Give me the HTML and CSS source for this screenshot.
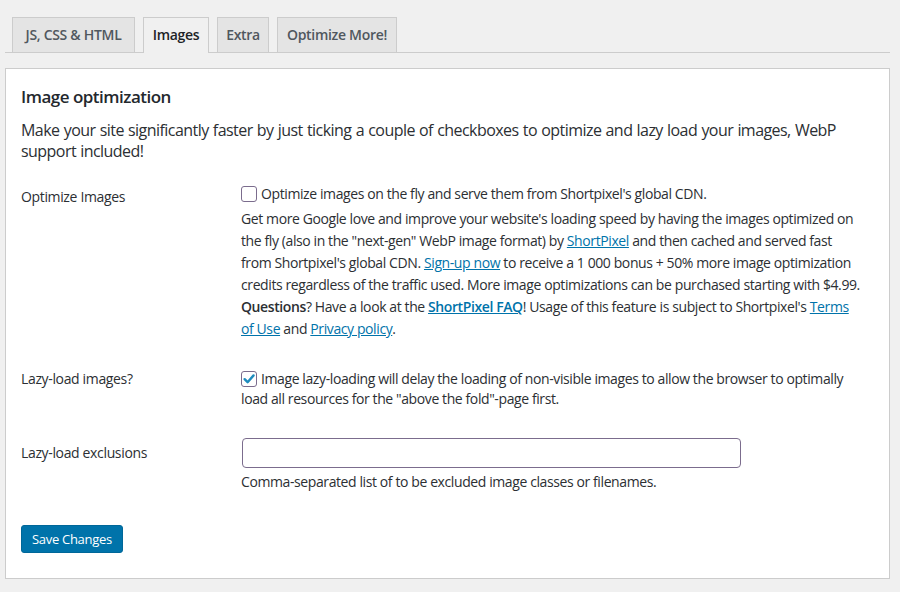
FILE: index.html
```html
<!DOCTYPE html>
<html lang="en">
<head>
<meta charset="utf-8">
<title>Image optimization</title>
<link rel="stylesheet" href="styles.css">
</head>
<body>
<div class="wrap">
  <nav class="nav-tabs">
    <a class="tab tab-js">JS, CSS &amp; HTML</a>
    <a class="tab tab-img active">Images</a>
    <a class="tab tab-extra">Extra</a>
    <a class="tab tab-more">Optimize More!</a>
  </nav>
  <form class="panel">
    <h2 class="title">Image optimization</h2>
    <p class="intro">Make your site significantly faster by just ticking a couple of checkboxes to optimize and lazy load your images, WebP support included!</p>

    <div class="row row-opt">
      <div class="label">Optimize Images</div>
      <div class="field">
        <label class="check-line"><span class="cb"></span>Optimize images on the fly and serve them from Shortpixel's global CDN.</label>
        <p class="desc">Get more Google love and improve your website's loading speed by having the images optimized on the fly (also in the "next-gen" WebP image format) by <a>ShortPixel</a> and then cached and served fast from Shortpixel's global CDN. <a>Sign-up now</a> to receive a 1 000 bonus + 50% more image optimization credits regardless of the traffic used. More image optimizations can be purchased starting with $4.99.</p>
        <p class="desc"><strong>Questions</strong>? Have a look at the <a><strong>ShortPixel FAQ</strong></a>! Usage of this feature is subject to Shortpixel's <a>Terms of Use</a> and <a>Privacy policy</a>.</p>
      </div>
    </div>

    <div class="row row-lazy">
      <div class="label">Lazy-load images?</div>
      <div class="field">
        <label class="check-line lazy"><span class="cb checked"><svg viewBox="0 0 16 16" width="16" height="16"><path d="M3.6 8.2 L6.6 11.2 L12.6 4.4" fill="none" stroke="#1e8cbe" stroke-width="2.4" stroke-linecap="round" stroke-linejoin="round"/></svg></span>Image lazy-loading will delay the loading of non-visible images to allow the browser to optimally load all resources for the "above the fold"-page first.</label>
      </div>
    </div>

    <div class="row row-excl">
      <div class="label">Lazy-load exclusions</div>
      <div class="field">
        <input class="text-input" type="text" value="">
        <p class="small-desc">Comma-separated list of to be excluded image classes or filenames.</p>
      </div>
    </div>

    <div class="actions">
      <button type="button" class="button-primary">Save Changes</button>
    </div>
  </form>
</div>
</body>
</html>
```

FILE: styles.css
```css
html, body {
  margin: 0;
  padding: 0;
  background: #f0f0f0;
}
body {
  font-family: "Open Sans", "Noto Sans", "Liberation Sans", sans-serif;
  color: #2c2f33;
  font-size: 14px;
}
.wrap {
  padding: 17px 10px 0 5px;
}
.nav-tabs {
  display: flex;
  gap: 8px;
  padding-left: 7px;
  border-bottom: 1px solid #cccccc;
  height: 35px;
}
.tab {
  display: block;
  box-sizing: border-box;
  border: 1px solid #cccccc;
  border-bottom: none;
  background: #e4e4e4;
  padding: 5px 0;
  height: 35px;
  line-height: 24px;
  font-size: 14px;
  font-weight: 600;
  color: #50575e;
  letter-spacing: -0.3px;
  text-decoration: none;
  text-align: center;
  white-space: nowrap;
}
.tab-js { width: 123px; }
.tab-img { width: 66px; }
.tab-extra { width: 52px; }
.tab-more { width: 120px; }
.tab.active {
  background: #f0f0f0;
  color: #1d2327;
  height: 36px;
}
.panel {
  display: block;
  margin-top: 15px;
  background: #ffffff;
  border: 1px solid #cccccc;
  padding: 16px 15px 25px 15px;
  height: 468px;
}
.title {
  margin: 0;
  font-size: 17px;
  font-weight: 600;
  line-height: 24px;
  color: #23282d;
  letter-spacing: -0.5px;
}
.intro {
  margin: 11px 0 0 0;
  font-size: 16px;
  line-height: 21px;
  color: #2c2f33;
  letter-spacing: -0.55px;
  word-spacing: 0.6px;
}
.row {
  display: grid;
  grid-template-columns: 220px 1fr;
}
.label {
  font-size: 14px;
  color: #2c2f33;
  letter-spacing: -0.35px;
}
.field {
  font-size: 14px;
  color: #2c2f33;
  letter-spacing: -0.4px;
  padding-right: 14px;
}
.row-opt {
  margin-top: 22px;
}
.row-opt .label {
  padding-top: 3px;
  line-height: 20px;
}
.check-line {
  display: block;
  line-height: 20px;
}
.cb {
  display: inline-block;
  box-sizing: border-box;
  width: 16px;
  height: 16px;
  border: 1px solid #7b6c8d;
  border-radius: 3px;
  vertical-align: -3px;
  margin-right: 4px;
  position: relative;
  background: #ffffff;
}
.cb svg {
  position: absolute;
  left: -1px;
  top: -1px;
}
.desc {
  margin: 4px 0 0 0;
  line-height: 22px;
}
.desc + .desc {
  margin-top: 0;
}
a {
  color: #0073aa;
  text-decoration: underline;
}
strong {
  font-weight: 600;
}
.row-lazy {
  margin-top: 29px;
}
.row-lazy .label,
.row-lazy .check-line {
  line-height: 20px;
}
.row-excl {
  margin-top: 29px;
}
.row-excl .label {
  line-height: 30px;
}
.text-input {
  display: block;
  box-sizing: border-box;
  width: 499px;
  height: 30px;
  margin: 0 0 0 1px;
  border: 1px solid #7b6c8d;
  border-radius: 4px;
  background: #ffffff;
  font: inherit;
  padding: 0 8px;
}
.small-desc {
  margin: 4px 0 0 0;
  line-height: 20px;
  font-size: 14px;
}
.actions {
  margin-top: 33px;
}
.button-primary {
  display: inline-block;
  background: #0073aa;
  color: #ffffff;
  border: 1px solid #006799;
  border-radius: 3px;
  height: 28px;
  padding: 0 10px;
  font-family: "Open Sans", "Noto Sans", sans-serif;
  font-size: 13px;
  line-height: 26px;
  letter-spacing: -0.3px;
  cursor: pointer;
}
```
